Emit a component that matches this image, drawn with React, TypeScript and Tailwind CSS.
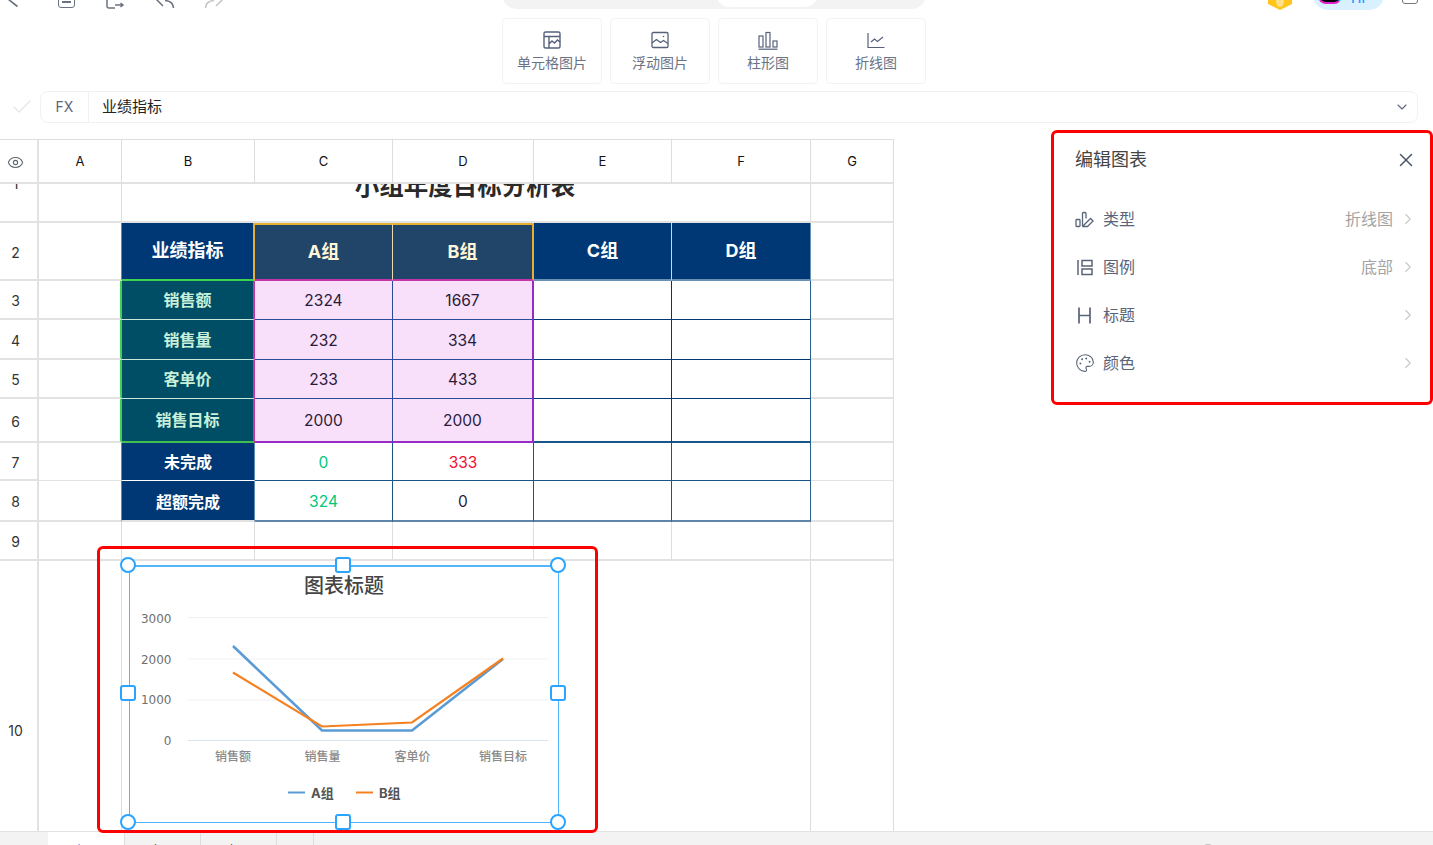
import React from "react";
import { Check, ChevronDown, ChevronRight, Eye, Palette, X } from "lucide-react";

const FONT = "font-['Inter','Noto_Sans_CJK_SC',sans-serif]";

function Cell({ className = "", children }: { className?: string; children?: React.ReactNode }) {
  return <div className={`flex items-center justify-center overflow-hidden border-r border-b min-w-0 ${className}`}>{children}</div>;
}

const GRID = "border-r-[#dddddd] border-b-2! border-b-[#e2e2e2]";
const RH = "border-r-2! border-b-2! pr-[6px] pt-[2px] text-[14px] text-[#333333] border-r-[#e2e2e2] border-b-[#e2e2e2]";
const CH = "border-b-2! pt-[1px] text-[13px] text-[#111111] border-r-[#dddddd] border-b-[#e2e2e2]";
const NUM = "pt-[2px] text-[15.5px] text-[#2a1a3a]";
const BOLD18 = "text-lg font-bold";
const BOLD16 = "text-base font-bold";

function ToolButton({ icon, label }: { icon: React.ReactNode; label: string }) {
  return (
    <div className="flex h-[66px] w-[100px] flex-col items-center justify-center gap-[3px] rounded border border-[#f3f3f3] bg-white text-sm text-[#6a7385]">
      {icon}
      <span className="leading-5">{label}</span>
    </div>
  );
}

function PanelRow({ icon, label, value }: { icon: React.ReactNode; label: string; value?: string }) {
  return (
    <div className="flex h-12 items-center">
      <span className="flex w-[28px] items-center text-[#5a6478]">{icon}</span>
      <span className="text-base text-[#5a6478]">{label}</span>
      <span className="ml-auto text-base text-[#a3a3a3]">{value}</span>
      <ChevronRight size={18} strokeWidth={1.5} className="ml-[6px] text-[#c9c9c9]" />
    </div>
  );
}

function Handle({ className }: { className: string }) {
  return <div className={`absolute h-[16px] w-[16px] border-2 border-[#2aa4ff] bg-white ${className}`} />;
}

export default function App() {
  return (
    <div className={`relative h-[845px] w-full overflow-hidden bg-white ${FONT}`}>
      {/* top bar, cut off by the window */}
      <div className="flex h-[18px] items-start overflow-hidden">
        <svg width="12" height="8" viewBox="0 0 12 8" fill="none" stroke="#6b7280" strokeWidth="1.6" className="ml-[7px]">
          <path d="M1 -1L10.5 6.5" />
        </svg>
        <div className="-mt-[12px] ml-[39px] h-[20px] w-[17px] rounded-[3px] border-[1.5px] border-[#6b7280]">
          <div className="mx-auto mt-[12px] h-[1.5px] w-[9px] bg-[#6b7280]" />
        </div>
        <svg width="19" height="9" viewBox="0 0 19 9" fill="none" stroke="#6b7280" strokeWidth="1.5" className="ml-[31px]">
          <path d="M16 -1H2.5A1.8 1.8 0 0 0 1 1V6A1.8 1.8 0 0 0 3 8H9" />
          <path d="M9 5H17M14.5 3L17 5L14.5 7" />
        </svg>
        <svg width="20" height="9" viewBox="0 0 20 9" fill="none" stroke="#6b7280" strokeWidth="1.5" className="ml-[30px]">
          <path d="M1 -1L8 6" />
          <path d="M10 0.5Q18 1 18.5 8" />
        </svg>
        <svg width="20" height="9" viewBox="0 0 20 9" fill="none" stroke="#c4c4c4" strokeWidth="1.5" className="ml-[29px]">
          <path d="M1.5 8Q2 1 10 0.5" />
          <path d="M12 6L19 -1" />
        </svg>
        <div className="-mt-[20px] ml-[278px] flex h-[29px] w-[424px] items-start justify-end rounded-[20px] bg-[#f3f3f3] pr-[108px]">
          <div className="h-[27px] w-[102px] rounded-[14px] bg-white" />
        </div>
        <svg width="24" height="10" viewBox="0 0 24 10" className="ml-[342px]">
          <polygon points="0,0 24,0 24,4 12,10 0,4" fill="#ffc51a" />
          <ellipse cx="12" cy="1" rx="4" ry="6" fill="#ffe08a" />
        </svg>
        <div className="-mt-[20px] ml-[21px] flex h-[30px] w-[71px] items-start rounded-[15px] bg-[#d9f0ff] pl-[5px] text-[14px] font-medium text-[#1e9fff]">
          <div className="mt-[3px] h-[21px] w-[24px] rounded-lg border-[2px] border-[#e020d0] border-r-[#00d8ff] bg-black" />
          <span className="ml-[9px] mt-[8px] leading-5">Hi</span>
        </div>
        <div className="-mt-[16px] ml-[18px] h-[20px] w-[16px] rounded-[3px] border-[1.5px] border-[#777777]" />
      </div>

      {/* chart toolbar */}
      <div className="flex gap-2 pl-[502px]">
        <ToolButton
          label="单元格图片"
          icon={
            <svg width="20" height="20" viewBox="0 0 20 20" fill="none" stroke="currentColor" strokeWidth="1.4" className="text-[#56617a]">
              <rect x="2" y="2" width="16" height="16" rx="1.5" />
              <path d="M2 6.5h16M7 6.5V18M7 14l3-3 2.5 2 3-3 2.5 2" />
            </svg>
          }
        />
        <ToolButton
          label="浮动图片"
          icon={
            <svg width="20" height="20" viewBox="0 0 20 20" fill="none" stroke="currentColor" strokeWidth="1.3" className="text-[#56617a]">
              <rect x="2" y="2.5" width="16" height="15" rx="1.2" />
              <path d="M2 13l4.5-3.5 4 3 3-2 4.5 3" />
              <circle cx="13.5" cy="6.5" r="0.8" fill="currentColor" stroke="none" />
            </svg>
          }
        />
        <ToolButton
          label="柱形图"
          icon={
            <svg width="20" height="20" viewBox="0 0 20 20" fill="none" stroke="currentColor" strokeWidth="1.2" className="text-[#56617a]">
              <rect x="1" y="6" width="4" height="11" />
              <rect x="8" y="2.5" width="4" height="14.5" />
              <rect x="15" y="11" width="4" height="6" />
              <path d="M0.5 19.2h19" />
            </svg>
          }
        />
        <ToolButton
          label="折线图"
          icon={
            <svg width="20" height="20" viewBox="0 0 20 20" fill="none" stroke="currentColor" strokeWidth="1.2" className="text-[#56617a]">
              <path d="M2 3v14.5h16.5" />
              <path d="M5 12l3.5-3 3 2.5 5.5-4.5" />
            </svg>
          }
        />
      </div>

      {/* formula bar */}
      <div className="mt-[7px] flex h-8 items-center pr-[15px]">
        <Check size={24} strokeWidth={1.6} className="ml-[10px] mr-[6px] text-[#e9e9e9]" />
        <div className="flex h-8 flex-1 items-center rounded-lg border border-[#f1f1f1]">
          <span className="flex h-full w-12 items-center justify-center border-r border-[#f1f1f1] text-sm text-[#5d667a]">FX</span>
          <span className="ml-[13px] text-[15px] text-[#222222]">业绩指标</span>
          <ChevronDown size={16} strokeWidth={1.7} className="ml-auto mr-[7px] text-[#5d667a]" />
        </div>
      </div>

      {/* sheet */}
      <div className="mt-4 grid w-[894px] grid-cols-[39px_83px_133px_138px_141px_138px_139px_83px] grid-rows-[44px_39px_58px_39px_40px_39px_44px_38px_41px_39px_270px] border-t border-[#dddddd]">
        <Cell className={RH}><Eye size={17} strokeWidth={1.5} className="text-[#5f6470]" /></Cell>
        <Cell className={CH}>A</Cell>
        <Cell className={CH}>B</Cell>
        <Cell className={CH}>C</Cell>
        <Cell className={CH}>D</Cell>
        <Cell className={CH}>E</Cell>
        <Cell className={CH}>F</Cell>
        <Cell className={CH}>G</Cell>

        <Cell className={`${RH} !items-start`}><span className="-mt-[12px] leading-5">1</span></Cell>
        <Cell className={GRID} />
        <Cell className="col-span-5 !items-start border-b-2! border-r-[#dddddd] border-b-[#e2e2e2] pr-[2px]">
          <span className="-mt-[10px] text-[24.5px] leading-6 font-bold text-[#2a2a2a]">小组年度目标分析表</span>
        </Cell>
        <Cell className={GRID} />

        <Cell className={RH}>2</Cell>
        <Cell className="border-r-[#5f8ab0] border-b-2! border-b-[#e2e2e2]" />
        <Cell className={`border-r-2! border-b-2! border-r-[#e8b030] border-b-[#3fd150] bg-[#003876] text-white ${BOLD18}`}>业绩指标</Cell>
        <Cell className={`border-t-2 border-t-[#e8b030] border-b-2! border-r-[#e8dcb0] border-b-[#c436a8] bg-[#204568] text-[#fff6d8] ${BOLD18}`}>A组</Cell>
        <Cell className={`border-t-2 border-t-[#e8b030] border-r-2! border-b-2! border-r-[#e8b030] border-b-[#c436a8] bg-[#204568] text-[#fff6d8] ${BOLD18}`}>B组</Cell>
        <Cell className={`border-b-2! border-r-[#c8d8e8] border-b-[#6a90b5] bg-[#003876] text-white ${BOLD18}`}>C组</Cell>
        <Cell className={`border-b-2! border-r-[#6a90b5] border-b-[#6a90b5] bg-[#003876] text-white ${BOLD18}`}>D组</Cell>
        <Cell className={GRID} />

        <Cell className={RH}>3</Cell>
        <Cell className="border-r-2! border-b-2! border-r-[#3fd150] border-b-[#e2e2e2]" />
        <Cell className={`border-r-2! border-r-[#c436a8] border-b-[#c8e8d8] bg-[#004d66] text-[#c8f0d8] ${BOLD16}`}>销售额</Cell>
        <Cell className={`border-r-[#2a4a9a] border-b-[#2a4a9a] bg-[#f8e0fb] ${NUM}`}>2324</Cell>
        <Cell className={`border-r-2! border-r-[#9a2bc8] border-b-[#2a4a9a] bg-[#f8e0fb] ${NUM}`}>1667</Cell>
        <Cell className="border-r-[#003876] border-b-[#003876]" />
        <Cell className="border-r-[#2a6090] border-b-[#003876]" />
        <Cell className={GRID} />

        <Cell className={RH}>4</Cell>
        <Cell className="border-r-2! border-b-2! border-r-[#3fd150] border-b-[#e2e2e2]" />
        <Cell className={`border-r-2! border-r-[#c436a8] border-b-[#c8e8d8] bg-[#004d66] text-[#c8f0d8] ${BOLD16}`}>销售量</Cell>
        <Cell className={`border-r-[#2a4a9a] border-b-[#2a4a9a] bg-[#f8e0fb] ${NUM}`}>232</Cell>
        <Cell className={`border-r-2! border-r-[#9a2bc8] border-b-[#2a4a9a] bg-[#f8e0fb] ${NUM}`}>334</Cell>
        <Cell className="border-r-[#003876] border-b-[#003876]" />
        <Cell className="border-r-[#2a6090] border-b-[#003876]" />
        <Cell className={GRID} />

        <Cell className={RH}>5</Cell>
        <Cell className="border-r-2! border-b-2! border-r-[#3fd150] border-b-[#e2e2e2]" />
        <Cell className={`border-r-2! border-r-[#c436a8] border-b-[#c8e8d8] bg-[#004d66] text-[#c8f0d8] ${BOLD16}`}>客单价</Cell>
        <Cell className={`border-r-[#2a4a9a] border-b-[#2a4a9a] bg-[#f8e0fb] ${NUM}`}>233</Cell>
        <Cell className={`border-r-2! border-r-[#9a2bc8] border-b-[#2a4a9a] bg-[#f8e0fb] ${NUM}`}>433</Cell>
        <Cell className="border-r-[#003876] border-b-[#003876]" />
        <Cell className="border-r-[#2a6090] border-b-[#003876]" />
        <Cell className={GRID} />

        <Cell className={RH}>6</Cell>
        <Cell className="border-r-2! border-b-2! border-r-[#3fd150] border-b-[#e2e2e2]" />
        <Cell className={`border-r-2! border-b-2! border-r-[#c436a8] border-b-[#3fc050] bg-[#004d66] text-[#c8f0d8] ${BOLD16}`}>销售目标</Cell>
        <Cell className={`border-b-2! border-r-[#2a4a9a] border-b-[#9a2bc8] bg-[#f8e0fb] ${NUM}`}>2000</Cell>
        <Cell className={`border-r-2! border-b-2! border-r-[#9a2bc8] border-b-[#9a2bc8] bg-[#f8e0fb] ${NUM}`}>2000</Cell>
        <Cell className="border-b-2! border-r-[#003876] border-b-[#1a5588]" />
        <Cell className="border-b-2! border-r-[#2a6090] border-b-[#1a5588]" />
        <Cell className={GRID} />

        <Cell className={RH}>7</Cell>
        <Cell className="border-r-[#5f8ab0] border-b-[#e2e2e2]" />
        <Cell className={`border-r-[#5f8ab0] border-b-white bg-[#003876] text-white ${BOLD16}`}>未完成</Cell>
        <Cell className="border-r-[#1a5588] border-b-[#1a5588] pt-[2px] text-[15.5px] text-[#00c878]">0</Cell>
        <Cell className="border-r-[#1a5588] border-b-[#1a5588] pt-[2px] text-[15.5px] text-[#f01030]">333</Cell>
        <Cell className="border-r-[#1a5588] border-b-[#1a5588]" />
        <Cell className="border-r-[#2a6090] border-b-[#1a5588]" />
        <Cell className="border-r-[#dddddd] border-b-[#e2e2e2]" />

        <Cell className={RH}>8</Cell>
        <Cell className="border-r-[#5f8ab0] border-b-2! border-b-[#e2e2e2]" />
        <Cell className={`border-r-[#5f8ab0] border-b-2! border-b-[#e2e2e2] bg-[#003876] pt-[2px] text-white ${BOLD16}`}>超额完成</Cell>
        <Cell className="border-r-[#1a5588] border-b-2! border-b-[#5f85a8] pt-[3px] text-[15.5px] text-[#00c878]">324</Cell>
        <Cell className="border-r-[#1a5588] border-b-2! border-b-[#5f85a8] pt-[3px] text-[15.5px] text-[#2a1a3a]">0</Cell>
        <Cell className="border-r-[#1a5588] border-b-2! border-b-[#5f85a8]" />
        <Cell className="border-r-[#2a6090] border-b-2! border-b-[#5f85a8]" />
        <Cell className={GRID} />

        <Cell className={RH}>9</Cell>
        <Cell className={GRID} />
        <Cell className={GRID} />
        <Cell className={GRID} />
        <Cell className={GRID} />
        <Cell className={GRID} />
        <Cell className={GRID} />
        <Cell className={GRID} />

        <Cell className="border-r-2! border-b-0! border-r-[#e2e2e2] pr-[6px] pt-[69px] text-[14px] text-[#333333]">10</Cell>
        <Cell className="border-b-0! border-r-[#dddddd]" />
        <Cell className="col-span-5 border-b-0! border-r-[#dddddd]" />
        <Cell className="border-b-0! border-r-[#dddddd]" />
      </div>

      {/* sheet tabs */}
      <div className="flex h-[14px] overflow-hidden border-t border-[#e2e2e2] bg-[#f3f3f3] text-sm">
        <div className="w-12 shrink-0" />
        <div className="w-[76px] shrink-0 bg-white pt-[9px] text-center leading-5 text-[#1e9fff]">表一</div>
        <div className="w-[76px] shrink-0 border-l border-[#dddddd] pt-[9px] text-center leading-5 text-[#555555]">表二</div>
        <div className="w-[76px] shrink-0 border-l border-[#dddddd] pt-[9px] text-center leading-5 text-[#555555]">表三</div>
        <div className="w-[38px] shrink-0 border-x border-[#dddddd] pt-[8px] text-center leading-5 text-[#555555]">+</div>
        <div className="ml-[887px] mt-[12px] h-[14px] w-[14px] rounded-full bg-[#bdbdbd]" />
      </div>

      {/* edit-chart panel */}
      <div className="absolute left-[1051px] top-[130px] h-[275px] w-[382px] rounded-md border-[3px] border-[#ff0000] bg-white pl-[21px] pr-[13px]">
        <div className="flex h-[54px] items-center justify-between">
          <span className="text-lg text-[#444444]">编辑图表</span>
          <X size={22} strokeWidth={1.6} className="text-[#4b5568]" />
        </div>
        <div className="mt-[8px]">
          <PanelRow
            label="类型"
            value="折线图"
            icon={
              <svg width="19" height="19" viewBox="0 0 19 19" fill="none" stroke="currentColor" strokeWidth="1.3">
                <rect x="1" y="9.5" width="4" height="7" rx="0.8" />
                <path d="M7.5 16.5V3.5a1 1 0 0 1 1-1h1.5a1 1 0 0 1 1 1v5" />
                <path d="M8 16l7.5-7.5 2.5 2.5-5.5 5.5H8z" />
              </svg>
            }
          />
          <PanelRow
            label="图例"
            value="底部"
            icon={
              <svg width="19" height="19" viewBox="0 0 19 19" fill="none" stroke="currentColor" strokeWidth="1.5">
                <path d="M3 2v15" />
                <rect x="7" y="2.5" width="10" height="5.5" />
                <rect x="7" y="11" width="10" height="5.5" />
              </svg>
            }
          />
          <PanelRow
            label="标题"
            icon={
              <svg width="19" height="19" viewBox="0 0 19 19" fill="none" stroke="currentColor" strokeWidth="1.7">
                <path d="M4 1.5v16M15 1.5v16M4 9.5h11" />
              </svg>
            }
          />
          <PanelRow label="颜色" icon={<Palette size={20} strokeWidth={1.3} />} />
        </div>
      </div>

      {/* chart selection */}
      <div className="absolute left-[97px] top-[546px] h-[287px] w-[501px] rounded-md border-[3px] border-[#ff0000]" />
      <div className="absolute left-[129px] top-[565px] h-[258px] w-[430px] border border-t-2 border-[#50b4ff] bg-white">
        <svg viewBox="130 567 428 255" className="h-[255px] w-[428px]">
          <text x="344" y="593" textAnchor="middle" fontSize="20" fontWeight="500" fill="#444444">图表标题</text>
          <path d="M188 617.5H548M188 659H548M188 700H548" stroke="#f1f1f1" strokeWidth="1" />
          <path d="M188 740.5H548" stroke="#dbe3f3" strokeWidth="1.2" />
          <g fontSize="12" fill="#707070" textAnchor="end" fontFamily="'DejaVu Sans',sans-serif">
            <text x="171.5" y="622.5">3000</text>
            <text x="171.5" y="663.5">2000</text>
            <text x="171.5" y="704">1000</text>
            <text x="171.5" y="745">0</text>
          </g>
          <polyline points="233,646 322,730.5 412,730.5 503,659" fill="none" stroke="#5b9bd5" strokeWidth="2.6" />
          <polyline points="233,672.5 322,726.5 412,722.5 503,658.5" fill="none" stroke="#f5801f" strokeWidth="2.2" />
          <g fontSize="12" fontWeight="500" fill="#8a8a8a" textAnchor="middle">
            <text x="233" y="761">销售额</text>
            <text x="322.5" y="761">销售量</text>
            <text x="412.5" y="761">客单价</text>
            <text x="503" y="761">销售目标</text>
          </g>
          <path d="M288 792.5h17" stroke="#5b9bd5" strokeWidth="2" />
          <path d="M356 792.5h17" stroke="#f5801f" strokeWidth="2" />
          <g fontSize="13" fontWeight="700" fill="#555555">
            <text x="311" y="797.5">A组</text>
            <text x="379" y="797.5">B组</text>
          </g>
        </svg>
        <Handle className="-left-[10px] -top-[10px] rounded-full" />
        <Handle className="-right-[8px] -top-[10px] rounded-full" />
        <Handle className="-bottom-[8px] -left-[10px] rounded-full" />
        <Handle className="-bottom-[8px] -right-[8px] rounded-full" />
        <Handle className="left-[205px] -top-[10px] rounded-[3px]" />
        <Handle className="left-[205px] -bottom-[8px] rounded-[3px]" />
        <Handle className="-left-[10px] top-[118px] rounded-[3px]" />
        <Handle className="-right-[8px] top-[118px] rounded-[3px]" />
      </div>
    </div>
  );
}
